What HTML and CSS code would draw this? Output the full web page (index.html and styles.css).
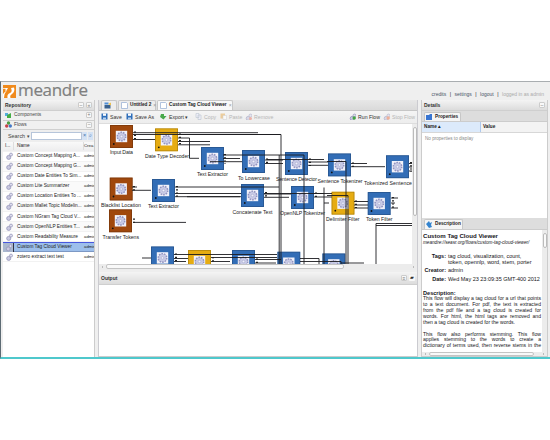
FILE: index.html
```
<!DOCTYPE html>
<html lang="en">
<head>
<meta charset="utf-8">
<title>Meandre</title>
<link rel="stylesheet" href="styles.css">
</head>
<body>
<svg width="0" height="0" class="defs">
  <defs>
    <g id="gear"><circle cx="5" cy="5" r="3.4" fill="#c6c8e4" stroke="#9294c0" stroke-width="1.5" stroke-dasharray="1.3 .8"/><circle cx="5" cy="5" r="2.8" fill="#c9cbe6"/><circle cx="5" cy="5" r="1.1" fill="#f0f0fa" stroke="#a5a7cc" stroke-width=".5"/></g>
    <g id="gears"><circle cx="3.2" cy="5.4" r="2" fill="#c9c9e0" stroke="#9a9abd" stroke-width=".9"/><circle cx="5.5" cy="2.6" r="1.5" fill="#dedeee" stroke="#9a9abd" stroke-width=".8"/></g>
    <g id="node"><rect width="23" height="23"/><path d="M.5 22.5V.5h22v22z" fill="none" stroke="#000" stroke-opacity=".18"/><rect x="5.8" y="5.8" width="11.4" height="11.4" fill="#f2f2fa"/><use href="#gear" transform="translate(5.5 5.5) scale(1.2)"/><circle cx="3.8" cy="19" r=".9" fill="#111"/></g>
    <g id="disk"><path d="M.5.5h6v6h-6z" fill="#2f6fba"/><path d="M2 .5h3v2.3H2z" fill="#fff"/><path d="M2 4.5h3v2H2z" fill="#b8d2ee"/></g>
    <g id="page"><path d="M.5.5h5l1 1v5h-6z" fill="#fff" stroke="#9db4d6" stroke-width=".8"/></g>
  </defs>
</svg>
<div class="app">
  <header class="top">
    <svg class="logo" width="13" height="13" viewBox="0 0 13 13"><path d="M0 0h13v13H0z" fill="#f08a1c"/><path d="M0 3h5L3.500 5.500C3.500 7 2 7.500 1.500 9.500L1 13H0zM4.500 13c-.5-3 .5-4 2.500-5s2-2.500 1-5l3-.5c1 3 0 5-2 6.500s-2 2-1.500 4z" fill="#fff"/><path d="M0 3.800h2.500v2.500L0 9z" fill="#f08a1c"/></svg>
    <span class="brand">meandre</span>
    <nav><b>credits</b><i>|</i><b>settings</b><i>|</i><b>logout</b><i>|</i><em>logged in as admin</em></nav>
  </header>
  <main>
    <aside class="left">
      <div class="bar h11"><strong>Repository</strong><span class="btns"><u>–</u><u>«</u></span></div>
      <div class="bar h10"><svg width="7" height="7" viewBox="0 0 7 7"><path d="M0 1h3v3H0z" fill="#55aede"/><path d="M2 3l4-2v5H2z" fill="#45ad45"/></svg><span>Components</span><span class="btns"><u>+</u></span></div>
      <div class="bar h9"><svg width="7" height="7" viewBox="0 0 7 7"><circle cx="3.500" cy="2" r="1.700" fill="#4b9e43"/><circle cx="1.700" cy="5" r="1.700" fill="#c8434a"/><circle cx="5.300" cy="5" r="1.700" fill="#4578c5"/></svg><span>Flows</span><span class="btns"><u>–</u></span></div>
      <div class="search"><span>Search ▾</span><div class="input"></div><u>×</u><u>⌕</u></div>
      <div class="row head"><span class="c1">I...</span><span class="c2">Name</span><span class="c3">Crea</span></div>
      <div class="row"><svg class="c1" viewBox="0 0 8 8"><use href="#gears"/></svg><span class="c2">Custom Concept Mapping A...</span><span class="c3">admin</span></div>
      <div class="row alt"><svg class="c1" viewBox="0 0 8 8"><use href="#gears"/></svg><span class="c2">Custom Concept Mapping G...</span><span class="c3">admin</span></div>
      <div class="row"><svg class="c1" viewBox="0 0 8 8"><use href="#gears"/></svg><span class="c2">Custom Date Entities To Sim...</span><span class="c3">admin</span></div>
      <div class="row alt"><svg class="c1" viewBox="0 0 8 8"><use href="#gears"/></svg><span class="c2">Custom Lite Summarizer</span><span class="c3">admin</span></div>
      <div class="row"><svg class="c1" viewBox="0 0 8 8"><use href="#gears"/></svg><span class="c2">Custom Location Entities To ...</span><span class="c3">admin</span></div>
      <div class="row alt"><svg class="c1" viewBox="0 0 8 8"><use href="#gears"/></svg><span class="c2">Custom Mallet Topic Modelin...</span><span class="c3">admin</span></div>
      <div class="row"><svg class="c1" viewBox="0 0 8 8"><use href="#gears"/></svg><span class="c2">Custom NGram Tag Cloud V...</span><span class="c3">admin</span></div>
      <div class="row alt"><svg class="c1" viewBox="0 0 8 8"><use href="#gears"/></svg><span class="c2">Custom OpenNLP Entities T...</span><span class="c3">admin</span></div>
      <div class="row"><svg class="c1" viewBox="0 0 8 8"><use href="#gears"/></svg><span class="c2">Custom Readability Measure</span><span class="c3">admin</span></div>
      <div class="row sel"><svg class="c1" viewBox="0 0 8 8"><use href="#gears"/></svg><span class="c2">Custom Tag Cloud Viewer</span><span class="c3">admin</span></div>
      <div class="row"><svg class="c1" viewBox="0 0 8 8"><use href="#gears"/></svg><span class="c2">zotero extract text test</span><span class="c3">admin</span></div>
    </aside>
    <section class="center">
      <div class="tabs">
        <div class="tab t1"><svg width="8" height="7" viewBox="0 0 8 7"><path d="M.5.5h4v2h-4z" fill="#4f8fd8"/><path d="M.5 3h6v3.500h-6z" fill="#39618f"/><path d="M4 2l3-1.500v3z" fill="#ecc04f"/></svg></div>
        <div class="tab t2"><svg width="7" height="7" viewBox="0 0 7 7"><use href="#page"/></svg><strong>Untitled 2</strong><u>×</u></div>
        <div class="tab t3 on"><svg width="7" height="7" viewBox="0 0 7 7"><use href="#page"/></svg><strong>Custom Tag Cloud Viewer</strong><u>×</u></div>
      </div>
      <div class="tools">
        <span class="tool w25"><svg viewBox="0 0 7 7"><use href="#disk"/></svg>Save</span>
        <span class="tool w34"><svg viewBox="0 0 7 7"><use href="#disk"/></svg>Save As</span>
        <span class="tool w33"><svg viewBox="0 0 7 7"><path d="M1 1h3v2h2.500L3.500 6.500 0 4z" fill="#49a84b"/></svg>Export ▾</span>
        <span class="tool off w27"><svg viewBox="0 0 7 7"><path d="M1 .5h3v4H1zM3 2h3v4.500H3z" fill="#eef" stroke="#9ab" stroke-width=".6"/></svg>Copy</span>
        <span class="tool off w25"><svg viewBox="0 0 7 7"><path d="M.5.5h4.500v5H.5z" fill="#e9b565"/><path d="M3 2.500h3.500v4H3z" fill="#fff" stroke="#bbb" stroke-width=".5"/></svg>Paste</span>
        <span class="tool off"><svg viewBox="0 0 7 7"><use href="#gears"/><circle cx="5.500" cy="5.500" r="1.500" fill="#eb8a78"/></svg>Remove</span>
        <span class="tool run"><svg viewBox="0 0 7 7"><use href="#gears"/><circle cx="5.200" cy="5" r="1.700" fill="#42a444"/></svg>Run Flow</span>
        <span class="tool off w31"><svg viewBox="0 0 7 7"><use href="#gears"/><circle cx="5.200" cy="5" r="1.700" fill="#ee8660"/></svg>Stop Flow</span>
      </div>
      <div class="work">
        <svg class="canvas" width="313" height="140" viewBox="99 124 313 140">
          <g fill="#a0480d"><use href="#node" x="110" y="125"/><use href="#node" x="109.700" y="177.500"/><use href="#node" x="109" y="209.300"/></g>
          <g fill="#e6ac12"><use href="#node" x="155" y="128.300"/><use href="#node" x="331.500" y="191.700"/><use href="#node" x="188" y="250"/></g>
          <g fill="#326db6"><use href="#node" x="201" y="147"/><use href="#node" x="242" y="150"/><use href="#node" x="285" y="152"/><use href="#node" x="328" y="153.400"/><use href="#node" x="386" y="155.200"/><use href="#node" x="152" y="179"/><use href="#node" x="241" y="184"/><use href="#node" x="291" y="186"/><use href="#node" x="367.700" y="192"/><use href="#node" x="151" y="246.400"/><use href="#node" x="232" y="250"/><use href="#node" x="277.300" y="251.700"/><use href="#node" x="322.300" y="253.400"/></g>
          <g class="wires">
            <path d="M133 132.700H258M133 134.500H281V264M133 139.500H155M178 134.500H281M178 138H189.500V158.300H199M178 141.500H210M178 144.800H210"/>
            <path d="M223 155H304M223 158.500H240M210 161.700H242M265 160H283M265 163.500H283M304 155V264M279.200 155V264M308 159.500H324M308 162H328M308 165.300H328M267 159.500H308M327 161.500H346V264M351 163.500H367M351 166.700H385M409 163.500h3M409 167h3M409 171h3"/>
            <path d="M132 187H137M132 190.300H151M175 187H279M175 193.500H241M175 196.700H241M187 196.700H240M264 194H291M264 197.300H289M314 193.500H332M314 197H332M324 187.500V264M324 203H329M327 195.500H348V264M354 201.500H368M354 205H368M354 208H368M391 198H398M391 203H395M391 208H398M264 193.500H324M133 222.400H186"/>
            <path d="M142 258H151M174 254.500H277M174 258.500H188M174 261.500H186M211 257.500H277M211 261.500H230M255 259.500H281M255 263H276M300 258.500H319V264M300 261.500H341V264M341 263H364M412 223.500H376V264M412 225.500H376"/>
          </g>
          <g class="ports"><path d="M135 131.500v9M180 133.500v12M225 154v10M267 158.500v6M310 158.500v8M353 162.500v5M134 186v5.500M177 186v11.500M266 192v6.500M316 192.500v6M356 200.500v8.500M393 197v12M134 218.500v5M176 253.500v9M213 257v6M257 258.500v5M411 162v10"/></g>
          <g class="labels">
            <text x="110" y="154" textLength="23">Input Data</text><text x="145" y="157.500" textLength="44">Date Type Decoder</text><text x="197" y="176" textLength="31">Text Extractor</text><text x="238" y="179.500" textLength="32">To Lowercase</text><text x="276" y="181" textLength="41">Sentence Detector</text><text x="317.500" y="183" textLength="45">Sentence Tokenizer</text><text x="364" y="184.500" textLength="48">Tokenized Sentence</text>
            <text x="101" y="206.500" textLength="40">Blacklist Location</text><text x="148" y="208" textLength="31">Text Extractor</text><text x="102.500" y="238.500" textLength="36.500">Transfer Tokens</text><text x="232.500" y="213.500" textLength="40">Concatenate Text</text><text x="280" y="215" textLength="45">OpenNLP Tokenizer</text><text x="326" y="221" textLength="33.500">Delimiter Filter</text><text x="366" y="221" textLength="26.500">Token Filter</text>
          </g>
        </svg>
        <div class="vscroll"><div></div></div>
      </div>
      <div class="hscroll"><i></i><div></div><i class="next"></i></div>
      <div class="output bar"><strong>Output</strong><span class="btns"><u>≡</u><u class="dark">▰</u></span></div>
      <div class="outbody"></div>
    </section>
    <aside class="right">
      <div class="bar h11"><strong>Details</strong><span class="btns"><u>–</u></span></div>
      <div class="ptabs"><div class="ptab"><svg width="7" height="6" viewBox="0 0 7 6"><path d="M0 1h3l1-1h2v6H0z" fill="#3976d2"/></svg><strong>Properties</strong></div></div>
      <div class="phead"><span class="sorted">Name ▴</span><span>Value</span></div>
      <div class="empty">No properties to display</div>
      <div class="ptabs desc"><div class="ptab"><svg width="7" height="7" viewBox="0 0 7 7"><path d="M0 3l3-3 1 2 2-1-1 3 1 2-3 1z" fill="#3484cf"/></svg><strong>Description</strong></div></div>
      <div class="dwrap">
        <div class="dtext">
          <h1>Custom Tag Cloud Viewer</h1>
          <p class="uri">meandre://seasr.org/flows/custom-tag-cloud-viewer/</p>
          <dl><dt>Tags:</dt><dd>tag cloud, visualization, count,<br>token, opennlp, word, stem, porter</dd><dt>Creator:</dt><dd>admin</dd><dt>Date:</dt><dd class="date">Wed May 23 23:09:35 GMT-400 2012</dd></dl>
          <h2>Description:</h2>
          <p class="j">This flow will display a tag cloud for a url that points</p>
          <p class="j">to a text document. For pdf, the text is extracted</p>
          <p class="j">from the pdf file and a tag cloud is created for</p>
          <p class="j">words. For html, the html tags are removed and</p>
          <p>then a tag cloud is created for the words.</p>
          <p class="j gap">This flow also performs stemming. This flow</p>
          <p class="j">applies stemming to the words to create a</p>
          <p class="j">dictionary of terms used, then reverse stems in the</p>
        </div>
        <div class="vscroll"><div></div></div>
      </div>
      <div class="hscroll"><i></i><div></div><i class="next"></i></div>
    </aside>
  </main>
</div>
</body>
</html>
```
FILE: styles.css
```
* { box-sizing: border-box; }
body { margin: 0; padding-top: 81px; height: 440px; overflow: hidden; background: #fff; color: #222; font: 5.1px/6px "Liberation Sans", sans-serif; white-space: nowrap; }
.defs { display: none; }
h1, h2, p, dl, dd { margin: 0; }
u, i, em { text-decoration: none; font-style: normal; }
svg { flex: none; }
.app { height: 278px; background: #efefef; border-top: 1px solid #a9adb0; border-left: 1px solid #5d6b74; border-bottom: 2px solid #4fc8cc; overflow: hidden; }
.top { height: 17.5px; display: flex; align-items: center; padding: 0 6px 0 2px; }
.logo { margin-top: 1px; }
.brand { font: 17px/20px "Open Sans", sans-serif; color: #7f7f7f; letter-spacing: -.35px; margin-left: 2px; margin-top: -2px; -webkit-text-stroke: .2px #7f7f7f; }
.top nav { margin-left: auto; display: flex; gap: 3.500px; padding-top: 7px; font-size: 5px; }
.top b { font-weight: 400; color: #4a5568; }
.top em { color: #aaa; }
main { display: flex; height: 257px; }
.left { width: 92px; margin-left: 2px; background: #fff; overflow: hidden; border-right: 1px solid #ccc; }
.bar { display: flex; align-items: center; gap: 2px; padding: 0 2px; background: linear-gradient(#f4f4f4, #dcdcdc); border-bottom: 1px solid #cfcfcf; color: #444; }
.bar strong { font-size: 5px; color: #333; }
.h11 { height: 11px; } .h10 { height: 10px; } .h9 { height: 9px; }
.h10, .h9 { background: #f0f0f0; font-size: 4.800px; }
.btns { margin-left: auto; display: flex; gap: 2px; }
.btns u { width: 6px; height: 6px; border: 1px solid #ccc; border-radius: 1px; line-height: 4px; text-align: center; background: #f8f8f8; color: #777; }
.btns .dark { border: 0; color: #333; }
.search { height: 12px; background: #eee; display: flex; align-items: center; padding-left: 5px; color: #444; font-size: 5.400px; }
.search > span { width: 23px; }
.input { width: 52px; height: 8px; background: #fff; border: 1px solid #b6c5da; }
.search u { width: 5px; height: 8px; background: #d4e2f4; line-height: 7px; text-align: center; color: #456fa8; margin-right: 1px; }
.row { display: flex; height: 10.080px; align-items: center; border-bottom: 1px solid #f2f2f2; color: #222; font-size: 4.750px; }
.row .c1 { width: 11px; height: 8px; flex: none; padding-left: 2px; }
.row .c2 { width: 70px; flex: none; padding-left: 3px; }
.row .c3 { font-size: 4.300px; }
.row.alt { background: #fafafa; }
.row.head { height: 10px; background: linear-gradient(#f9f9f9, #ededee); }
.row.head span { border-right: 1px solid #ddd; line-height: 8px; }
.row.head .c3 { border: 0; }
.row.sel { background: #9dbfeb; border-top: 1px solid #4858de; border-bottom-color: #7c98c4; }
.row.sel .c1 { background: #aab8cf; border-right: 1px solid #334; height: 9px; }
.center { width: 320px; margin-left: 3px; border: solid #cbcbd0; border-width: 0 1px; background: #eee; }
.tabs { display: flex; align-items: flex-end; height: 11px; padding-left: 2px; gap: 1px; background: linear-gradient(#e7e7e7, #dadada); border-bottom: 1px solid #c6c6c6; }
.tab { height: 10px; display: flex; align-items: center; border: 1px solid #c7c7c7; border-bottom: 0; border-radius: 2px 2px 0 0; background: #ededed; padding: 0 2px; gap: 2px; }
.tab strong { font-size: 4.700px; }
.tab u { margin-left: auto; color: #999; }
.t1 { width: 16px; } .t2 { width: 38px; } .t3 { width: 76px; }
.tab.on { background: #f8f8f8; }
.tools { height: 13px; display: flex; align-items: center; padding: 0 2px; background: linear-gradient(#f4f4f4, #ededed); border-bottom: 1px solid #ddd; font-size: 5.200px; }
.tool { display: flex; align-items: center; gap: 2px; color: #333; flex: none; }
.tool svg { width: 7px; height: 7px; }
.tool.off { color: #b6b6b6; } .tool.off svg { opacity: .6; }
.w25 { width: 25px; } .w34 { width: 34px; } .w33 { width: 35px; } .w27 { width: 25px; } .w31 { width: 32px; }
.run { margin-left: auto; width: 34px; }
.work { display: flex; height: 140px; background: #fff; }
.canvas { display: block; }
.wires { fill: none; stroke: #1b1b1f; stroke-width: .9; }
.ports { fill: none; stroke: #222; stroke-width: 2; stroke-dasharray: 1.200 2; }
.labels { font-size: 5.200px; fill: #222; }
.vscroll { width: 5px; background: #ececec; padding: 3px .5px; flex: none; }
.vscroll div { height: 89px; background: #fafafa; border: 1px solid #bbb; border-radius: 2px; }
.hscroll { height: 6px; background: #ececec; display: flex; align-items: center; padding: 0 3px; gap: 3px; }
.hscroll div { width: 238px; height: 5px; background: #f9f9f9; border: 1px solid #c4c4c4; border-radius: 2px; }
.hscroll i { border: 1.500px solid transparent; border-left: 0; border-right-color: #888; }
.hscroll .next { margin-left: auto; border: 1.500px solid transparent; border-right: 0; border-left-color: #888; }
.output { height: 13px; margin-top: 2px; }
.outbody { height: 72px; background: #fff; border-bottom: 1px solid #ccc; }
.right { width: 127px; margin-left: 3px; border: 1px solid #ccc; border-top: 0; background: #fff; overflow: hidden; }
.ptabs { height: 11px; background: #ddd; padding: 1px 2px 0; border-bottom: 1px solid #ccc; }
.ptab { width: 37px; height: 9px; display: flex; align-items: center; gap: 2px; padding-left: 1px; background: #f5f5f5; border: 1px solid #c7c7c7; border-bottom: 0; border-radius: 2px 2px 0 0; }
.ptab strong { font-size: 4.700px; font-weight: 700; }
.phead { height: 11px; display: flex; background: #f3f3f3; border-bottom: 1px solid #d7d7d7; line-height: 10px; font-weight: 700; font-size: 4.700px; }
.phead span { padding-left: 2px; }
.phead .sorted { width: 59px; background: #dceafb; border-right: 1px solid #adc9ee; }
.empty { height: 85px; padding: 3px; color: #888; font-size: 4.600px; }
.ptabs.desc { height: 12px; padding-top: 1px; }
.desc .ptab { width: 39px; height: 10px; }
.dwrap { height: 122px; display: flex; overflow: hidden; }
.dtext { width: 119px; padding: 3px 0 0 1px; flex: none; height: 122px; font-size: 5.100px; line-height: 5.900px; color: #151520; }
h1 { font-size: 6.100px; line-height: 6px; }
.uri { font-style: italic; font-size: 4.650px; line-height: 7px; }
dl { display: grid; grid-template-columns: 23px 1fr; column-gap: 2px; margin-top: 7px; line-height: 6.500px; font-size: 5.500px; }
dt { font-weight: 700; text-align: right; }
dd + dt, dd + dt + dd { margin-top: 1.800px; }
h2 { font-size: 5.600px; line-height: 6px; margin-top: 8px; }
.j { text-align: justify; text-align-last: justify; }
.gap { margin-top: 5.900px; }
.dwrap .vscroll { margin-left: auto; }
.dwrap .vscroll div { height: 15px; }
.right .hscroll { height: 5px; }
.right .hscroll div { width: 105px; height: 4px; }
```
